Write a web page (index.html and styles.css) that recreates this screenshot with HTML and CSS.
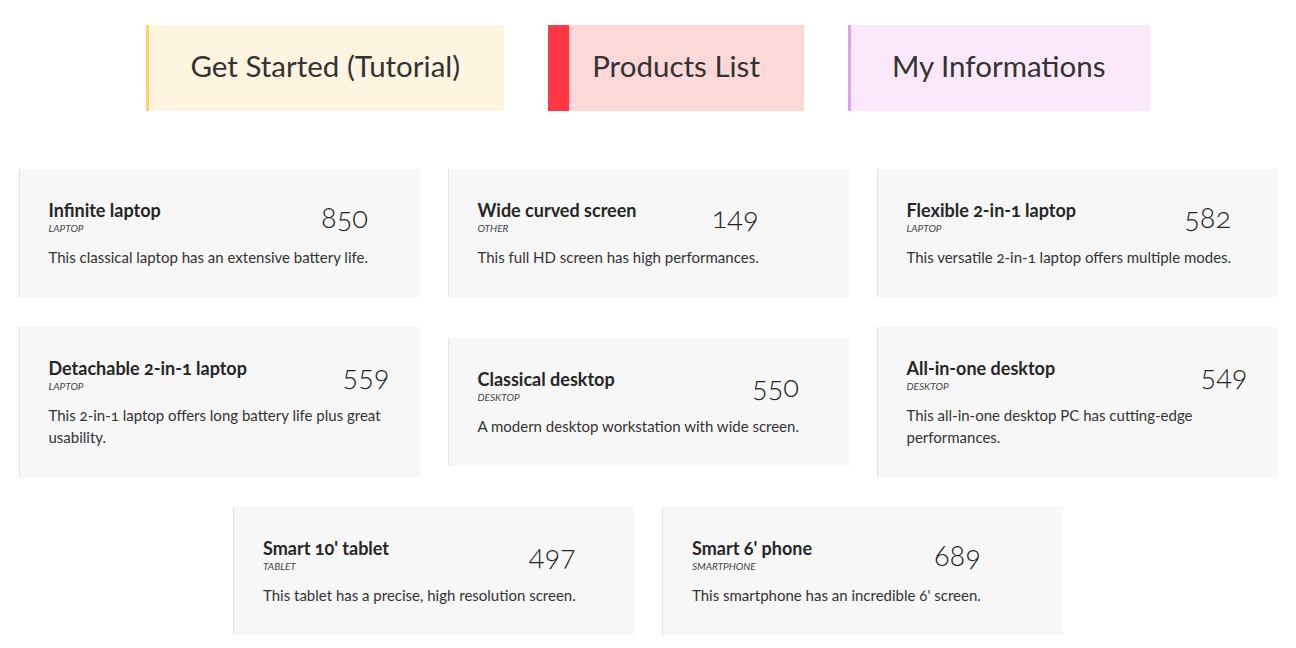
FILE: index.html
```html
<!DOCTYPE html>
<html lang="en">
<head>
<meta charset="utf-8">
<title>Products</title>
<link rel="stylesheet" href="styles.css">
</head>
<body>
<nav class="nav">
  <a class="nav-btn nav-tutorial" href="#">Get Started (Tutorial)</a>
  <a class="nav-btn nav-products" href="#">Products List</a>
  <a class="nav-btn nav-info" href="#">My Informations</a>
</nav>
<main class="products">
  <div class="card"><div class="card-inner">
    <div class="card-head"><div class="card-title"><h3>Infinite laptop</h3><span class="cat">LAPTOP</span></div><div class="price">850</div></div>
    <p class="desc">This classical laptop has an extensive battery life.</p>
  </div></div>
  <div class="card"><div class="card-inner">
    <div class="card-head"><div class="card-title"><h3>Wide curved screen</h3><span class="cat">OTHER</span></div><div class="price">149</div></div>
    <p class="desc">This full HD screen has high performances.</p>
  </div></div>
  <div class="card"><div class="card-inner">
    <div class="card-head"><div class="card-title"><h3>Flexible 2-in-1 laptop</h3><span class="cat">LAPTOP</span></div><div class="price">582</div></div>
    <p class="desc">This versatile 2-in-1 laptop offers multiple modes.</p>
  </div></div>
  <div class="card"><div class="card-inner">
    <div class="card-head"><div class="card-title"><h3>Detachable 2-in-1 laptop</h3><span class="cat">LAPTOP</span></div><div class="price">559</div></div>
    <p class="desc">This 2-in-1 laptop offers long battery life plus great usability.</p>
  </div></div>
  <div class="card"><div class="card-inner">
    <div class="card-head"><div class="card-title"><h3>Classical desktop</h3><span class="cat">DESKTOP</span></div><div class="price">550</div></div>
    <p class="desc">A modern desktop workstation with wide screen.</p>
  </div></div>
  <div class="card"><div class="card-inner">
    <div class="card-head"><div class="card-title"><h3>All-in-one desktop</h3><span class="cat">DESKTOP</span></div><div class="price">549</div></div>
    <p class="desc">This all-in-one desktop PC has cutting-edge performances.</p>
  </div></div>
  <div class="card"><div class="card-inner">
    <div class="card-head"><div class="card-title"><h3>Smart 10' tablet</h3><span class="cat">TABLET</span></div><div class="price">497</div></div>
    <p class="desc">This tablet has a precise, high resolution screen.</p>
  </div></div>
  <div class="card"><div class="card-inner">
    <div class="card-head"><div class="card-title"><h3>Smart 6' phone</h3><span class="cat">SMARTPHONE</span></div><div class="price">689</div></div>
    <p class="desc">This smartphone has an incredible 6' screen.</p>
  </div></div>
</main>
</body>
</html>
```
FILE: styles.css
```css
* { box-sizing: border-box; }
html, body { margin: 0; padding: 0; background: #fff; }
body {
  font-family: Lato, "Open Sans", "Liberation Sans", sans-serif;
  color: #2b2b2b;
  font-variant-numeric: oldstyle-nums;
}
.nav {
  display: flex;
  justify-content: center;
  gap: 44px;
  padding-top: 25px;
}
.nav-btn {
  display: flex;
  align-items: center;
  height: 86px;
  padding: 0 44px 5px 44px;
  font-size: 29.5px;
  font-weight: 400;
  color: #333;
  text-decoration: none;
  white-space: nowrap;
}
.nav-tutorial { background: #fdf5df; box-shadow: inset 3px 0 0 #ffd264; }
.nav-products { background: #fdd8d8; box-shadow: inset 21px 0 0 #ff3844; }
.nav-info { background: #fbe8fa; box-shadow: inset 3px 0 0 #e4a0e6; }

.products {
  display: flex;
  flex-wrap: wrap;
  justify-content: center;
  align-items: center;
  gap: 30px 28px;
  margin-top: 58px;
  padding: 0 18px;
}
.card {
  width: 401px;
  background: #f7f7f7;
  border-left: 1px solid #e2e2e2;
  padding: 30px 30px 29px 29px;
}
.card-inner { width: fit-content; max-width: 100%; }
.card-head {
  display: flex;
  justify-content: space-between;
  align-items: center;
  gap: 20px;
}
.card-title h3 {
  margin: 0;
  font-size: 18px;
  line-height: 22px;
  font-weight: 700;
  color: #262626;
}
.cat {
  display: block;
  margin-top: 2px;
  font-size: 10px;
  line-height: 11px;
  font-style: italic;
  color: #444;
  text-transform: uppercase;
}
.price {
  font-size: 29px;
  font-weight: 300;
  color: #222;
  line-height: 1;
}
.desc {
  margin: 12px 0 0;
  font-size: 15px;
  line-height: 22px;
  color: #333;
}
```
